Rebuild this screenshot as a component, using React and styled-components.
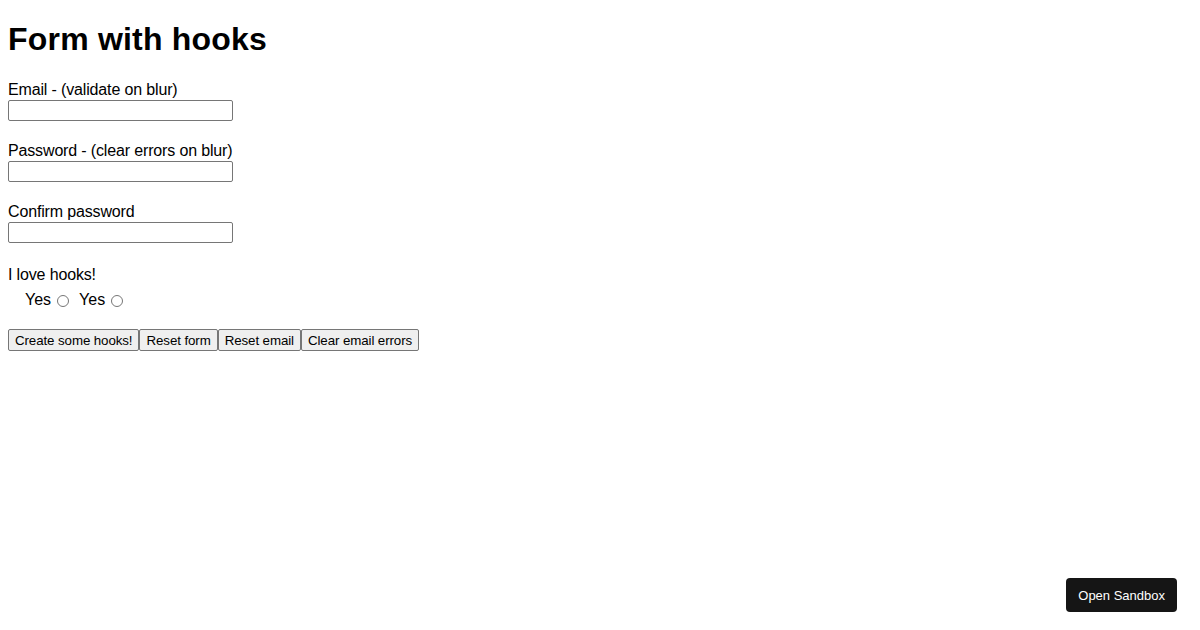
import React from 'react'
import styled, { createGlobalStyle } from 'styled-components'

const GlobalStyle = createGlobalStyle`
  html, body {
    margin: 0;
    background: #fff;
  }
  body {
    padding: 8px;
    font-family: "Liberation Sans", Arial, sans-serif;
    color: #000;
  }
`

const Title = styled.h1`
  font-size: 32px;
  font-weight: bold;
  line-height: 37px;
  letter-spacing: 0.2px;
  margin: 13px 0 23px;
`

const Field = styled.div`
  margin-bottom: 21px;
`

const Label = styled.label`
  display: block;
  font-size: 16px;
  line-height: 18px;
  letter-spacing: -0.15px;
`

const TextInput = styled.input`
  display: block;
  box-sizing: border-box;
  width: 225px;
  height: 21px;
  margin: 1px 0 0;
  padding: 1px 2px;
  border: 1px solid #767676;
  border-radius: 2px;
  font-family: "Liberation Sans", Arial, sans-serif;
  font-size: 13.33px;
`

const LoveGroup = styled.div`
  margin-top: 23px;
`

const RadioRow = styled.div`
  display: flex;
  align-items: center;
  padding-left: 17px;
  margin-top: 7px;
  font-size: 16px;
  line-height: 18px;
`

const RadioLabel = styled.label`
  display: flex;
  align-items: center;
  margin-right: 7px;
`

const Radio = styled.input`
  width: 12px;
  height: 12px;
  margin: 1px 3px 0 6px;
`

const Buttons = styled.div`
  display: flex;
  margin-top: 20px;
`

const Button = styled.button`
  box-sizing: border-box;
  height: 22px;
  margin: 0;
  padding: 1px 6px;
  border: 1px solid #767676;
  border-radius: 2px;
  background: #efefef;
  color: #000;
  font-family: "Liberation Sans", Arial, sans-serif;
  font-size: 13.33px;
  letter-spacing: -0.1px;
`

const SandboxButton = styled.button`
  position: fixed;
  right: 23px;
  bottom: 18px;
  height: 34px;
  padding: 0 12px;
  border: none;
  border-radius: 4px;
  background: #151515;
  color: #fff;
  font-family: "Liberation Sans", Arial, sans-serif;
  font-size: 13px;
`

export default function App() {
  return (
    <>
      <GlobalStyle />
      <form onSubmit={e => e.preventDefault()}>
        <Title>Form with hooks</Title>
        <Field>
          <Label htmlFor="email">Email - (validate on blur)</Label>
          <TextInput id="email" type="text" />
        </Field>
        <Field>
          <Label htmlFor="password">Password - (clear errors on blur)</Label>
          <TextInput id="password" type="password" />
        </Field>
        <Field>
          <Label htmlFor="confirm">Confirm password</Label>
          <TextInput id="confirm" type="password" />
        </Field>
        <LoveGroup>
          <Label>I love hooks!</Label>
          <RadioRow>
            <RadioLabel>Yes <Radio type="radio" name="love" /></RadioLabel>
            <RadioLabel>Yes <Radio type="radio" name="love" /></RadioLabel>
          </RadioRow>
        </LoveGroup>
        <Buttons>
          <Button type="submit">Create some hooks!</Button>
          <Button type="button">Reset form</Button>
          <Button type="button">Reset email</Button>
          <Button type="button">Clear email errors</Button>
        </Buttons>
      </form>
      <SandboxButton>Open Sandbox</SandboxButton>
    </>
  )
}
